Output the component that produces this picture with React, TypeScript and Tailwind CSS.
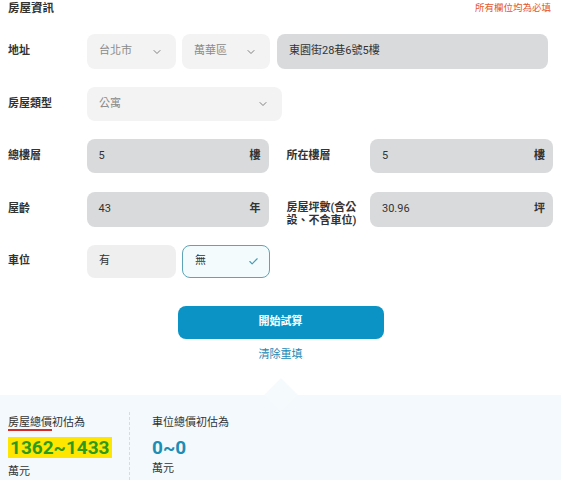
import { ChevronDown, Check } from 'lucide-react'

const font = { fontFamily: 'Roboto, "Noto Sans CJK TC", sans-serif' }

function Label({ children, className = '' }: { children: React.ReactNode; className?: string }) {
  return <div className={`text-[11px] font-semibold text-[#333] ${className}`}>{children}</div>
}

function SelectBox({ value, width }: { value: string; width: string }) {
  return (
    <div className={`flex h-full items-center justify-between rounded-lg bg-[#f3f3f3] pl-3 pr-[13px] ${width}`}>
      <span className="text-[11px] text-[#8a8a8a]">{value}</span>
      <ChevronDown className="h-[12px] w-[12px] text-[#808080]" strokeWidth={2} />
    </div>
  )
}

function UnitInput({ value, unit, width }: { value: string; unit: string; width: string }) {
  return (
    <div className={`flex h-full items-center justify-between rounded-lg bg-[#d9dadc] pl-3 pr-2 ${width}`}>
      <span className="text-[11px] text-[#333]">{value}</span>
      <span className="text-[11px] font-semibold text-[#333]">{unit}</span>
    </div>
  )
}

export default function App() {
  return (
    <div className="min-h-screen w-[561px] overflow-hidden bg-white" style={font}>
      <div className="px-2">
        {/* header */}
        <div className="flex h-4 items-center justify-between pt-[1px]">
          <span className="text-[11.5px] font-bold text-[#333]">房屋資訊</span>
          <span className="pr-[2px] text-[9.5px] text-[#e4572e]">所有欄位均為必填</span>
        </div>

        {/* 地址 */}
        <div className="mt-[18px] flex h-[35px] items-center">
          <Label className="w-[79px]">地址</Label>
          <SelectBox value="台北市" width="w-[89px]" />
          <div className="w-[6px]" />
          <SelectBox value="萬華區" width="w-[88px]" />
          <div className="w-[7px]" />
          <div className="flex h-full w-[271px] items-center rounded-lg bg-[#d9dadc] pl-3">
            <span className="text-[11px] text-[#333]">東園街28巷6號5樓</span>
          </div>
        </div>

        {/* 房屋類型 */}
        <div className="mt-[18px] flex h-[34px] items-center">
          <Label className="w-[79px]">房屋類型</Label>
          <SelectBox value="公寓" width="w-[195px]" />
        </div>

        {/* 樓層 */}
        <div className="mt-[18px] flex h-[34px] items-center">
          <Label className="w-[79px]">總樓層</Label>
          <UnitInput value="5" unit="樓" width="w-[183px]" />
          <Label className="ml-[18px] w-[84px]">所在樓層</Label>
          <UnitInput value="5" unit="樓" width="w-[184px]" />
        </div>

        {/* 屋齡 / 坪數 */}
        <div className="mt-[19px] flex h-[35px] items-center">
          <Label className="w-[79px]">屋齡</Label>
          <UnitInput value="43" unit="年" width="w-[183px]" />
          <Label className="ml-[18px] mt-[9px] w-[84px] leading-[13px]">
            房屋坪數(含公
            <br />
            設、不含車位)
          </Label>
          <UnitInput value="30.96" unit="坪" width="w-[184px]" />
        </div>

        {/* 車位 */}
        <div className="mt-[18px] flex h-[33px] items-center">
          <Label className="w-[79px]">車位</Label>
          <div className="flex h-full w-[89px] items-center rounded-lg bg-[#efefef] pl-3">
            <span className="text-[11px] text-[#333]">有</span>
          </div>
          <div className="w-[6px]" />
          <div className="flex h-full w-[88px] items-center justify-between rounded-lg border border-[#5ea4b6] bg-[#f4fbfd] pl-3 pr-[10px]">
            <span className="text-[11px] text-[#333]">無</span>
            <Check className="h-[11px] w-[11px] text-[#4a9cb3]" strokeWidth={2.5} />
          </div>
        </div>

        {/* actions */}
        <button className="mx-auto mt-[28px] flex h-[33px] w-[206px] items-center justify-center rounded-lg bg-[#0b93c5]">
          <span className="text-[11px] font-bold text-white">開始試算</span>
        </button>
        <div className="mt-[9px] text-center text-[11px] leading-[14px] text-[#2088b5]">清除重填</div>
      </div>

      {/* result */}
      <div className="relative mt-[33px] h-[85px] bg-[#f3f9fc]">
        <div className="absolute left-[269px] top-[-12px] h-[24px] w-[24px] rotate-45 bg-[#f5fafc]" />
        <div className="relative flex h-full pl-2">
          <div className="w-[121px] pt-[21px]">
            <div className="text-[11px] leading-[14px] text-[#333]">
              <span className="underline decoration-[#d62b2b] decoration-2 underline-offset-[3px]">房屋總價</span>
              初估為
            </div>
            <div className="mt-[7px] inline-flex h-[21px] items-center bg-[#ffe600] px-[2px]">
              <span className="text-[19px] font-bold leading-none text-[#2e9a1b]">1362~1433</span>
            </div>
            <div className="mt-[4px] text-[11px] leading-[14px] text-[#333]">萬元</div>
          </div>
          <div className="mt-[17px] border-l border-dashed border-[#d5dde2]" />
          <div className="pl-[22px] pt-[21px]">
            <div className="text-[11px] leading-[14px] text-[#333]">車位總價初估為</div>
            <div className="mt-[7px] flex h-[21px] items-center">
              <span className="text-[19px] font-bold leading-none text-[#1d8db5]">0~0</span>
            </div>
            <div className="mt-[4px] text-[11px] leading-[14px] text-[#333]">萬元</div>
          </div>
        </div>
      </div>
    </div>
  )
}
